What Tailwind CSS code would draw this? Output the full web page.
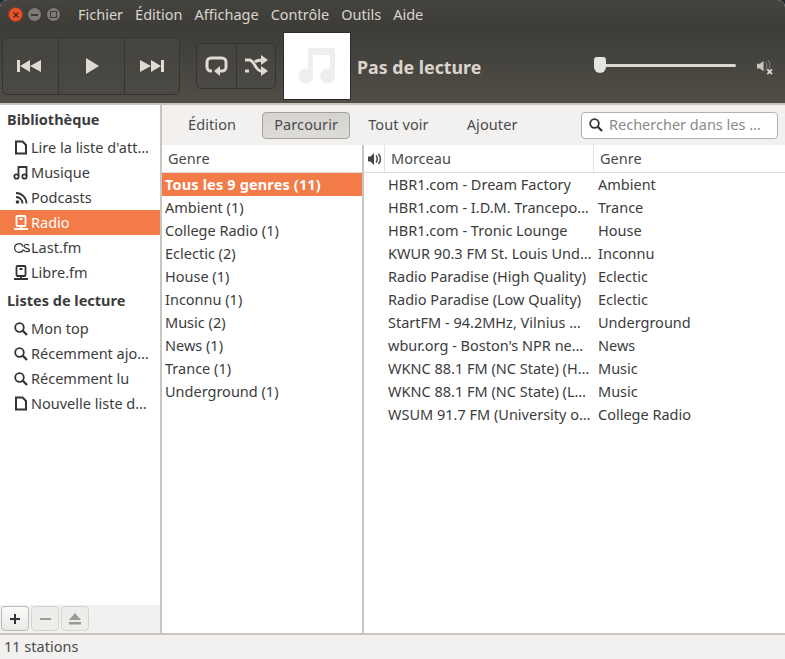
<!DOCTYPE html>
<html lang="fr">
<head>
    <meta charset="UTF-8">
    <title>Rhythmbox</title>
    <script src="https://cdn.jsdelivr.net/npm/@tailwindcss/browser@4"></script>
</head>
<body class="bg-[#1d2a33] overflow-hidden">
    <div class="w-[785px] h-[659px] flex flex-col rounded-t-[7px] overflow-hidden bg-[#f2f1f0] text-[14.5px] text-[#3c3c3c] font-['Noto_Sans',sans-serif]">

        <!-- Title bar and menu -->
        <div class="h-[29px] flex items-center bg-gradient-to-b from-[#46443f] to-[#3c3b37] text-[#d9d5cd]">
            <div class="w-[78px] pl-2 flex items-center gap-[4px] shrink-0">
                <div class="w-[15px] h-[15px] rounded-full bg-[#e9542a] border border-[#8e3a1c] flex items-center justify-center">
                    <svg width="8" height="8" viewBox="0 0 8 8"><path d="M1.500 1.500l5 5M6.500 1.500l-5 5" stroke="#3c2a20" stroke-width="1.300"/></svg>
                </div>
                <div class="w-[15px] h-[15px] rounded-full bg-[#7d7b74] border border-[#35342f] flex items-center justify-center">
                    <div class="w-[7px] h-[2px] bg-[#3c3b37]"></div>
                </div>
                <div class="w-[15px] h-[15px] rounded-full bg-[#7d7b74] border border-[#35342f] flex items-center justify-center">
                    <div class="w-[7px] h-[7px] border border-[#3c3b37]"></div>
                </div>
            </div>
            <div class="flex gap-[12px]">
                <span>Fichier</span><span>Édition</span><span>Affichage</span><span>Contrôle</span><span>Outils</span><span>Aide</span>
            </div>
        </div>

        <!-- Player toolbar -->
        <div class="h-[74px] flex items-center bg-gradient-to-b from-[#3d3c37] to-[#514e47] border-b-2 border-[#c9c6c1] box-content relative">
            <div class="ml-[2px] w-[178px] h-[58px] flex rounded-[5px] border border-[#35342f] bg-gradient-to-b from-[#44433e] to-[#4b4943]">
                <div class="w-[56px] flex items-center justify-center border-r border-[#35342f]">
                    <svg class="mr-[4px]" width="26" height="16" viewBox="0 0 26 16" fill="#dfdbd2"><rect x="1" y="2" width="3" height="12"/><path d="M14 2v12l-10-6zM25 2v12l-11-6z"/></svg>
                </div>
                <div class="w-[66px] flex items-center justify-center border-r border-[#35342f]">
                    <svg width="16" height="18" viewBox="0 0 16 18" fill="#dfdbd2"><path d="M2 1l13 8-13 8z"/></svg>
                </div>
                <div class="flex-1 flex items-center justify-center">
                    <svg width="26" height="16" viewBox="0 0 26 16" fill="#dfdbd2"><path d="M1 2l11 6-11 6zM12 2l10 6-10 6z"/><rect x="22" y="2" width="3" height="12"/></svg>
                </div>
            </div>
            <div class="ml-[16px] w-[80px] h-[46px] flex rounded-[5px] border border-[#35342f] bg-gradient-to-b from-[#44433e] to-[#4b4943]">
                <div class="w-[40px] flex items-center justify-center border-r border-[#35342f]">
                    <svg width="23" height="22" viewBox="0 0 23 22" fill="none" stroke="#dfdbd2" stroke-width="3"><path d="M7 16H6a4 4 0 0 1-4-4V7a4 4 0 0 1 4-4h11a4 4 0 0 1 4 4v5a4 4 0 0 1-4 4h-5"/><path d="M15 11l-6 5 6 5z" fill="#dfdbd2" stroke="none"/></svg>
                </div>
                <div class="flex-1 flex items-center justify-center">
                    <svg width="24" height="22" viewBox="0 0 24 22" fill="none" stroke="#dfdbd2" stroke-width="2.800"><path d="M1 5h4c6 0 6 11 12 11h2M1 16h4M11 7c2-2 4-2 8-2"/><path d="M17 0l7 5-7 5zM17 11l7 5-7 5z" fill="#dfdbd2" stroke="none"/></svg>
                </div>
            </div>
            <div class="ml-[7px] w-[68px] h-[68px] bg-white border border-[#2c2b28] flex items-center justify-center">
                <svg width="38" height="36" viewBox="0 0 38 36" fill="#eeeeee"><path d="M10 0h27v28h-5V7H15v21h-5z"/><circle cx="8" cy="28" r="7.500"/><circle cx="29.500" cy="28" r="7.500"/></svg>
            </div>
            <div class="ml-[6px] mt-[2px] text-[17.8px] font-bold text-[#d9d5cd]">Pas de lecture</div>
            <div class="ml-auto flex items-center mr-[12px] mt-[-2px]">
                <div class="flex items-center">
                    <div class="w-[12px] h-[16px] bg-[#e6e4e0] rounded-t-[3px] rounded-b-[6px] shrink-0"></div>
                    <div class="w-[130px] h-[3px] bg-[#dbd8d1] rounded-r-sm"></div>
                </div>
                <svg class="ml-[20px] mt-[4px]" width="17" height="16" viewBox="0 0 18 17" fill="#c9c6bf"><path d="M1 5h3l4-3v11l-4-3H1z"/><path d="M10 3c2 2 2 7 0 9M12.500 1c3 3 3 9 0 12" fill="none" stroke="#8d8a82" stroke-width="1"/><path d="M12 11l5 5M17 11l-5 5" stroke="#dfdbd2" stroke-width="1.800"/></svg>
            </div>
        </div>

        <!-- Main area -->
        <div class="flex-1 flex min-h-0">
            <!-- Sidebar -->
            <div class="w-[162px] shrink-0 flex flex-col border-r-2 border-[#c9c6c1]">
                <div class="flex-1 bg-white">
                    <div class="h-[30px] pl-[7px] flex items-center font-bold">Bibliothèque</div>
                    <div class="h-[25px] flex items-center pl-[14px] gap-[3px]">
                        <svg width="14" height="15" viewBox="0 0 14 15" fill="none" stroke="#333" stroke-width="2"><path d="M2 1.500h6.500l3.500 3.500v8.500H2z"/></svg>
                        <span class="whitespace-nowrap">Lire la liste d'att…</span>
                    </div>
                    <div class="h-[25px] flex items-center pl-[13px] gap-[3px]">
                        <svg width="15" height="15" viewBox="0 0 15 15" fill="none" stroke="#333" stroke-width="1.800"><path d="M5.500 11V2h8v9"/><circle cx="3.500" cy="11.500" r="2.200"/><circle cx="11.500" cy="11.500" r="2.200"/></svg>
                        <span>Musique</span>
                    </div>
                    <div class="h-[25px] flex items-center pl-[15px] gap-[3px]">
                        <svg width="13" height="14" viewBox="0 0 13 14" fill="none" stroke="#333" stroke-width="1.800"><circle cx="2.500" cy="11" r="1.800" fill="#333" stroke="none"/><path d="M1 6a6.500 6.500 0 0 1 6.500 6.500M1 2a10.500 10.500 0 0 1 10.500 10.500"/></svg>
                        <span>Podcasts</span>
                    </div>
                    <div class="h-[25px] flex items-center pl-[14px] gap-[3px] bg-[#f37b48] text-white">
                        <svg width="14" height="16" viewBox="0 0 14 16" fill="none" stroke="#fff" stroke-width="1.800"><rect x="2.500" y="1" width="9" height="10" rx="1"/><path d="M5.500 4h3M0 14h14"/><path d="M7 11v2"/></svg>
                        <span>Radio</span>
                    </div>
                    <div class="h-[25px] flex items-center pl-[14px] gap-[1px]">
                        <svg width="16" height="10" viewBox="0 0 16 10" fill="none" stroke="#333" stroke-width="1.200"><path d="M9.500 6.500C8.800 8.300 7.200 9.300 5 9.300A4.300 4.300 0 1 1 9 3.500"/><path d="M15 2.500c-1-1.500-5-1.500-5 .8 0 2.500 5.500 1.500 5.500 4 0 1.700-4.500 2-6-.3"/></svg>
                        <span>Last.fm</span>
                    </div>
                    <div class="h-[25px] flex items-center pl-[14px] gap-[3px]">
                        <svg width="14" height="16" viewBox="0 0 14 16" fill="none" stroke="#333" stroke-width="1.800"><rect x="2.500" y="1" width="9" height="10" rx="1"/><path d="M5.500 4h3M0 14h14"/><path d="M7 11v2"/></svg>
                        <span>Libre.fm</span>
                    </div>
                    <div class="h-[31px] pl-[7px] flex items-center font-bold">Listes de lecture</div>
                    <div class="h-[25px] flex items-center pl-[14px] gap-[3px]">
                        <svg width="14" height="14" viewBox="0 0 14 14" fill="none" stroke="#333" stroke-width="1.800"><circle cx="5.500" cy="5.500" r="4.300"/><path d="M8.800 8.800L13 13" stroke-width="2.300"/></svg>
                        <span>Mon top</span>
                    </div>
                    <div class="h-[25px] flex items-center pl-[14px] gap-[3px]">
                        <svg width="14" height="14" viewBox="0 0 14 14" fill="none" stroke="#333" stroke-width="1.800"><circle cx="5.500" cy="5.500" r="4.300"/><path d="M8.800 8.800L13 13" stroke-width="2.300"/></svg>
                        <span class="whitespace-nowrap">Récemment ajo…</span>
                    </div>
                    <div class="h-[25px] flex items-center pl-[14px] gap-[3px]">
                        <svg width="14" height="14" viewBox="0 0 14 14" fill="none" stroke="#333" stroke-width="1.800"><circle cx="5.500" cy="5.500" r="4.300"/><path d="M8.800 8.800L13 13" stroke-width="2.300"/></svg>
                        <span>Récemment lu</span>
                    </div>
                    <div class="h-[25px] flex items-center pl-[14px] gap-[3px]">
                        <svg width="14" height="15" viewBox="0 0 14 15" fill="none" stroke="#333" stroke-width="2"><path d="M2 1.500h6.500l3.500 3.500v8.500H2z"/></svg>
                        <span class="whitespace-nowrap">Nouvelle liste d…</span>
                    </div>
                </div>
                <div class="h-[28px] pl-[1px] pt-[1px] flex gap-[2px] bg-[#f2f1f0]">
                    <div class="w-[28px] h-[25px] rounded-[4px] border border-[#bdbab5] bg-gradient-to-b from-[#fbfbfa] to-[#e9e8e6] flex items-center justify-center">
                        <svg width="12" height="12" viewBox="0 0 12 12" fill="#333"><path d="M5 1h2v4h4v2H7v4H5V7H1V5h4z"/></svg>
                    </div>
                    <div class="w-[28px] h-[25px] rounded-[4px] border border-[#d6d4d0] bg-[#eeedeb] flex items-center justify-center">
                        <div class="w-[11px] h-[2px] bg-[#9c9a97]"></div>
                    </div>
                    <div class="w-[28px] h-[25px] rounded-[4px] border border-[#d6d4d0] bg-[#eeedeb] flex items-center justify-center">
                        <svg width="14" height="12" viewBox="0 0 14 12" fill="#9c9a97"><path d="M7 0l6 7H1z"/><rect x="1" y="9" width="12" height="2.500"/></svg>
                    </div>
                </div>
            </div>

            <!-- Content -->
            <div class="flex-1 min-w-0 flex flex-col">
                <div class="h-[40px] flex items-center relative shrink-0">
                    <div class="flex items-center pl-[14px] text-[#4b4b4b] tracking-[0.1px]">
                        <span class="px-[12px]">Édition</span>
                        <span class="ml-[14px] w-[88px] h-[27px] flex items-center justify-center rounded-[4px] border border-[#a5a29d] bg-gradient-to-b from-[#d5d3cf] to-[#dedcd9]">Parcourir</span>
                        <span class="ml-[6px] px-[12px]">Tout voir</span>
                        <span class="ml-[14px] px-[12px]">Ajouter</span>
                    </div>
                    <div class="ml-auto mr-[7px] w-[197px] h-[27px] rounded-[4px] border border-[#b5b2ad] bg-white flex items-center pl-[7px] gap-[6px] text-[#8a8a8a]">
                        <svg class="shrink-0" width="14" height="14" viewBox="0 0 14 14" fill="none" stroke="#333" stroke-width="1.800"><circle cx="5.500" cy="5.500" r="4.300"/><path d="M8.800 8.800L13 13" stroke-width="2.300"/></svg>
                        <span class="whitespace-nowrap">Rechercher dans les …</span>
                    </div>
                </div>

                <div class="flex-1 flex min-h-0 bg-white">
                    <!-- Genre browser -->
                    <div class="w-[202px] shrink-0 border-r-2 border-[#c9c6c1]">
                        <div class="h-[28px] flex items-center pl-[6px] border-b border-[#dcdad7] text-[#4b4b4b]">Genre</div>
                        <div class="h-[23px] flex items-center pl-[3px] bg-[#f37b48] text-white font-bold whitespace-nowrap tracking-[0.15px]">Tous les 9 genres (11)</div>
                        <div class="h-[23px] flex items-center pl-[3px]">Ambient (1)</div>
                        <div class="h-[23px] flex items-center pl-[3px]">College Radio (1)</div>
                        <div class="h-[23px] flex items-center pl-[3px]">Eclectic (2)</div>
                        <div class="h-[23px] flex items-center pl-[3px]">House (1)</div>
                        <div class="h-[23px] flex items-center pl-[3px]">Inconnu (1)</div>
                        <div class="h-[23px] flex items-center pl-[3px]">Music (2)</div>
                        <div class="h-[23px] flex items-center pl-[3px]">News (1)</div>
                        <div class="h-[23px] flex items-center pl-[3px]">Trance (1)</div>
                        <div class="h-[23px] flex items-center pl-[3px]">Underground (1)</div>
                    </div>

                    <!-- Track table -->
                    <div class="flex-1 min-w-0">
                        <div class="h-[28px] flex items-center border-b border-[#dcdad7] text-[#4b4b4b]">
                            <div class="w-[21px] h-full flex items-center justify-end border-r border-[#e4e2df] shrink-0">
                                <svg width="16" height="14" viewBox="0 0 16 14" fill="#444"><path d="M0 4.500h2.500L6 1v12L2.500 9.500H0z"/><path d="M8 3.500c1.500 2 1.500 5 0 7M10.500 2c2.300 3 2.300 7 0 10" fill="none" stroke="#444" stroke-width="1.500"/></svg>
                            </div>
                            <div class="w-[209px] h-full pl-[6px] flex items-center border-r border-[#e4e2df] shrink-0">Morceau</div>
                            <div class="pl-[6px]">Genre</div>
                        </div>
                        <div class="h-[23px] flex items-center whitespace-nowrap"><span class="w-[234px] pl-[24px] shrink-0">HBR1.com - Dream Factory</span><span>Ambient</span></div>
                        <div class="h-[23px] flex items-center whitespace-nowrap"><span class="w-[234px] pl-[24px] shrink-0">HBR1.com - I.D.M. Trancepo…</span><span>Trance</span></div>
                        <div class="h-[23px] flex items-center whitespace-nowrap"><span class="w-[234px] pl-[24px] shrink-0">HBR1.com - Tronic Lounge</span><span>House</span></div>
                        <div class="h-[23px] flex items-center whitespace-nowrap"><span class="w-[234px] pl-[24px] shrink-0">KWUR 90.3 FM St. Louis Und…</span><span>Inconnu</span></div>
                        <div class="h-[23px] flex items-center whitespace-nowrap"><span class="w-[234px] pl-[24px] shrink-0">Radio Paradise (High Quality)</span><span>Eclectic</span></div>
                        <div class="h-[23px] flex items-center whitespace-nowrap"><span class="w-[234px] pl-[24px] shrink-0">Radio Paradise (Low Quality)</span><span>Eclectic</span></div>
                        <div class="h-[23px] flex items-center whitespace-nowrap"><span class="w-[234px] pl-[24px] shrink-0">StartFM - 94.2MHz, Vilnius …</span><span>Underground</span></div>
                        <div class="h-[23px] flex items-center whitespace-nowrap"><span class="w-[234px] pl-[24px] shrink-0">wbur.org - Boston's NPR ne…</span><span>News</span></div>
                        <div class="h-[23px] flex items-center whitespace-nowrap"><span class="w-[234px] pl-[24px] shrink-0">WKNC 88.1 FM (NC State) (H…</span><span>Music</span></div>
                        <div class="h-[23px] flex items-center whitespace-nowrap"><span class="w-[234px] pl-[24px] shrink-0">WKNC 88.1 FM (NC State) (L…</span><span>Music</span></div>
                        <div class="h-[23px] flex items-center whitespace-nowrap"><span class="w-[234px] pl-[24px] shrink-0">WSUM 91.7 FM (University o…</span><span>College Radio</span></div>
                    </div>
                </div>
            </div>
        </div>

        <!-- Status bar -->
        <div class="h-[26px] shrink-0 flex items-center pl-[4px] border-t-2 border-[#c9c6c1] text-[#4b4b4b]">11 stations</div>
    </div>
</body>
</html>
